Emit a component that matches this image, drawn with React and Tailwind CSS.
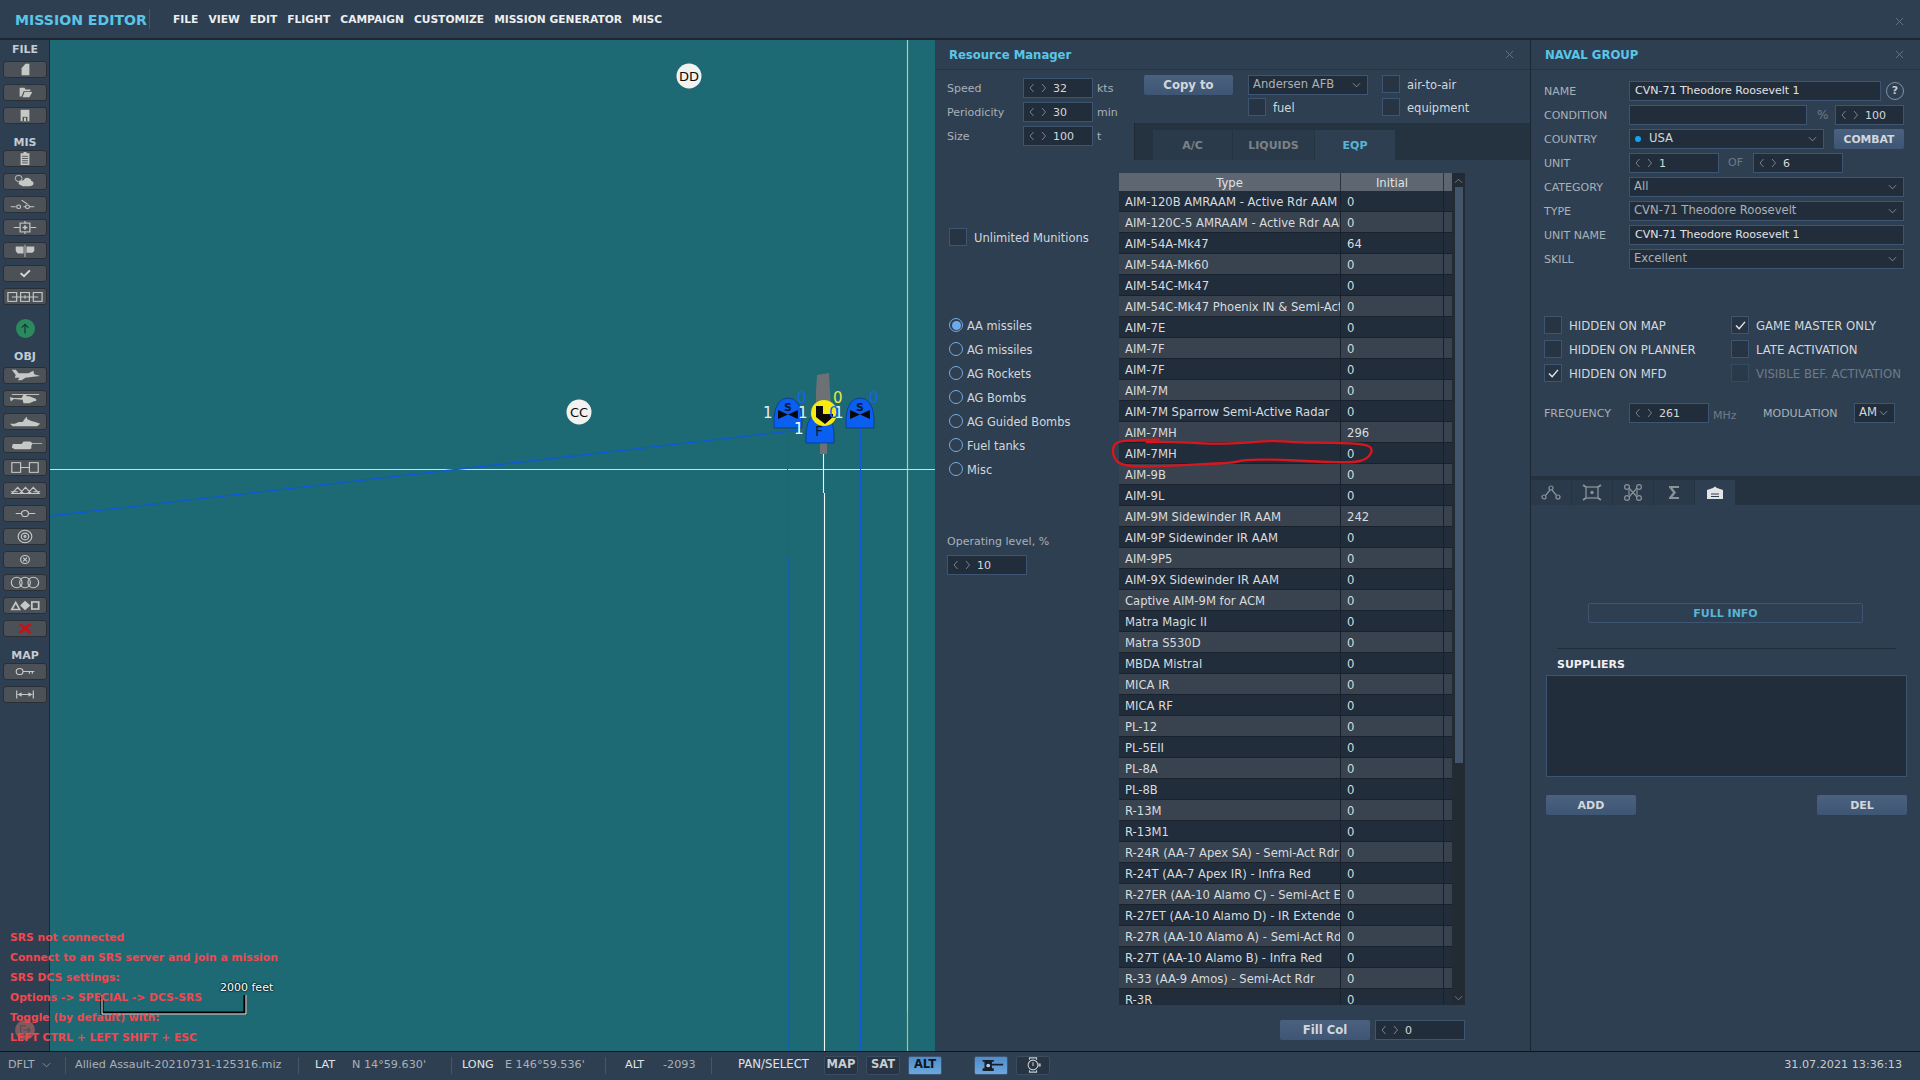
import { useMemo } from "react";

const fieldBox = "border border-[#3d5570] bg-[#222d3b]";

const rows = [
  ["AIM-120B AMRAAM - Active Rdr AAM", 0],
  ["AIM-120C-5 AMRAAM - Active Rdr AAM", 0],
  ["AIM-54A-Mk47", 64],
  ["AIM-54A-Mk60", 0],
  ["AIM-54C-Mk47", 0],
  ["AIM-54C-Mk47 Phoenix IN & Semi-Act Rdr", 0],
  ["AIM-7E", 0],
  ["AIM-7F", 0],
  ["AIM-7F", 0],
  ["AIM-7M", 0],
  ["AIM-7M Sparrow Semi-Active Radar", 0],
  ["AIM-7MH", 296],
  ["AIM-7MH", 0],
  ["AIM-9B", 0],
  ["AIM-9L", 0],
  ["AIM-9M Sidewinder IR AAM", 242],
  ["AIM-9P Sidewinder IR AAM", 0],
  ["AIM-9P5", 0],
  ["AIM-9X Sidewinder IR AAM", 0],
  ["Captive AIM-9M for ACM", 0],
  ["Matra Magic II", 0],
  ["Matra S530D", 0],
  ["MBDA Mistral", 0],
  ["MICA IR", 0],
  ["MICA RF", 0],
  ["PL-12", 0],
  ["PL-5EII", 0],
  ["PL-8A", 0],
  ["PL-8B", 0],
  ["R-13M", 0],
  ["R-13M1", 0],
  ["R-24R (AA-7 Apex SA) - Semi-Act Rdr", 0],
  ["R-24T (AA-7 Apex IR) - Infra Red", 0],
  ["R-27ER (AA-10 Alamo C) - Semi-Act Extended", 0],
  ["R-27ET (AA-10 Alamo D) - IR Extended Range", 0],
  ["R-27R (AA-10 Alamo A) - Semi-Act Rdr", 0],
  ["R-27T (AA-10 Alamo B) - Infra Red", 0],
  ["R-33 (AA-9 Amos) - Semi-Act Rdr", 0],
  ["R-3R", 0],
];

function Chevron() {
  return (
    <svg viewBox="0 0 10 6" className="w-[9px] h-[6px] shrink-0">
      <path d="M1 1 L5 5 L9 1" fill="none" stroke="#8d969e" strokeWidth="1" />
    </svg>
  );
}

function Spinner({ value, className }) {
  return (
    <div className={`${fieldBox} h-5 flex items-center pl-[5px] shrink-0 ${className}`}>
      <svg viewBox="0 0 18 10" className="w-[18px] h-[10px] shrink-0">
        <path d="M4.5 1 L1 5 L4.5 9 M13 1 L16.5 5 L13 9" fill="none" stroke="#78838e" strokeWidth="1" />
      </svg>
      <span className="ml-[6px] translate-y-px text-[11px] text-[#d3d7da]">{value}</span>
    </div>
  );
}

function Select({ children, className, textClass = "text-[#a9b1b8]" }) {
  return (
    <div className={`${fieldBox} h-5 flex items-center justify-between pl-[4px] pr-[6px] shrink-0 ${className}`}>
      <span className={`text-[11.6px] flex items-center ${textClass}`}>{children}</span>
      <Chevron />
    </div>
  );
}

function Check({ label, checked, dim, textClass = "text-[11.5px] text-[#d3d7da]" }) {
  return (
    <div className="flex items-center h-[18px]">
      <div className={`w-[18px] h-[18px] border flex items-center justify-center shrink-0 ${dim ? "border-[#364a60] bg-[#2a3a4b]" : "border-[#3d5570] bg-[#263444]"}`}>
        {checked && (
          <svg viewBox="0 0 12 10" className="w-[11px] h-[9px]">
            <path d="M1 5 L4.5 8.5 L11 1" fill="none" stroke="#e4e6e8" strokeWidth="1.6" />
          </svg>
        )}
      </div>
      <span className={`ml-[7px] translate-y-[2px] whitespace-nowrap ${textClass}`}>{label}</span>
    </div>
  );
}

function Radio({ label, on }) {
  return (
    <div className="flex items-center h-[14px]">
      <div className="w-[14px] h-[14px] rounded-full border border-[#7aa9d8] flex items-center justify-center shrink-0">
        {on && <div className="w-[9px] h-[9px] rounded-full bg-[#6daaea]" />}
      </div>
      <span className="ml-[4px] translate-y-[2px] text-[11.4px] text-[#d3d7da] whitespace-nowrap">{label}</span>
    </div>
  );
}

function BlueButton({ children, className }) {
  return (
    <div className={`h-5 pt-[2px] rounded-[2px] bg-gradient-to-b from-[#4a6280] to-[#3e5674] flex items-center justify-center font-bold text-[#d3d7da] shrink-0 ${className}`}>
      {children}
    </div>
  );
}

function CloseX() {
  return (
    <svg viewBox="0 0 10 10" className="w-[9px] h-[9px]">
      <path d="M1 1 L9 9 M9 1 L1 9" stroke="#66788a" strokeWidth="1" />
    </svg>
  );
}

const stroke = { fill: "none", stroke: "#c6c8c6", strokeWidth: 1.2 };
const fill = { fill: "#c6c8c6" };

const fileIcons = [
  <path key="a" {...fill} d="M18 7 L22 2 H26 V15 H18 Z" />,
  <g key="b">
    <path {...fill} d="M16 3 H21 L22 5 H27 V7 H20 L18 13 H16 Z" />
    <path {...fill} d="M21 8 H29 L26 14 H19 Z" />
  </g>,
  <g key="c">
    <path {...fill} d="M17 2 H26 V15 H17 Z" />
    <rect x="19" y="10" width="5" height="5" fill="#4b5156" />
    <rect x="20.5" y="11" width="2" height="4" fill="#c6c8c6" />
  </g>,
];

const misIcons = [
  <g key="a">
    <path {...fill} d="M20 1 H23 V2.5 H26 V16 H17 V2.5 H20 Z" />
    <path d="M18.5 6 H24.5 M18.5 8.5 H24.5 M18.5 11 H24.5 M18.5 13.5 H24.5" stroke="#4b5156" strokeWidth="1" />
  </g>,
  <g key="b">
    <circle cx="15" cy="5" r="3.5" fill="none" stroke="#c6c8c6" strokeWidth="1" />
    <path {...fill} d="M18 13 Q13 12 16 8 Q18 7 20 7 Q22 3 26 5 Q28 6 28 8 Q31 9 30 12 Q29 14 26 14 H19 Z" />
  </g>,
  <g key="c">
    <path {...stroke} d="M7 11 H12 M20 11 H22 M26 11 H31 M18 3.5 L24 8" />
    <circle cx="15" cy="11" r="2" {...stroke} />
    <circle cx="24" cy="11" r="2" {...stroke} />
  </g>,
  <g key="d">
    <path {...stroke} d="M10 8.5 H16 M27 8.5 H33 M21.5 1 V4 M21.5 13 V16" />
    <rect x="16.5" y="3.5" width="10" height="10" {...stroke} />
    <path d="M21.5 6 V11 M19 8.5 H24" stroke="#c6c8c6" strokeWidth="1.6" />
  </g>,
  <g key="e">
    <path {...fill} d="M12 4 H20 V12 H14 L12 9 Z" />
    <path {...fill} d="M23 4 H31 V9 L29 11 H23 Z" />
    <path d="M21.5 2 V16" stroke="#c6c8c6" strokeWidth="1" />
  </g>,
  <path key="f" d="M17 8 L20.5 11.5 L26.5 5" fill="none" stroke="#d6d8d6" strokeWidth="2" />,
  <g key="g" {...stroke}>
    <rect x="4" y="4" width="9" height="10" />
    <rect x="17" y="4" width="9" height="10" />
    <rect x="30" y="4" width="9" height="10" />
    <path d="M8 9 H35 M21.5 7 V11" />
  </g>,
];

const objIcons = [
  <path key="a" {...fill} d="M8 2 L12 2 L15 6 L25 6 L30 3 L31 7 L37 9 L30 10 L22 11 L18 14 L14 14 L16 11 L11 11 L12 8 Z" />,
  <g key="b">
    <path d="M8 4 H36" stroke="#c6c8c6" strokeWidth="1" />
    <path {...fill} d="M20 4 H23 V6 H26 L33 9 L33 11 L30 12 L26 14 H20 L19 10 L10 9 L7 12 L6 7 L10 8 H18 Z" />
  </g>,
  <path key="c" {...fill} d="M6 11 L11 11 L15 9 L19 9 L21 6 L23 3 L24 6 L28 8 L32 9 L37 11 L34 14 H9 Z" />,
  <path key="d" {...fill} d="M9 8 H18 L20 5 H27 L29 7 H39 V8 H29 L28 10 V13 L26 14 H11 L8 12 Z" />,
  <g key="e" {...stroke}>
    <rect x="8" y="3" width="9" height="11" />
    <rect x="26" y="3" width="9" height="11" />
    <path d="M17 8.5 H26" />
  </g>,
  <g key="f" {...stroke}>
    <path d="M8 12 L14 5 L20 12 Z M16 12 L22 5 L28 12 Z M24 12 L30 5 L36 12 Z" />
    <path d="M7 10 L14 10 M30 10 H37" />
  </g>,
  <g key="g" {...stroke}>
    <circle cx="21.5" cy="8.5" r="3.5" />
    <path d="M12 8.5 H18 M25 8.5 H32" />
  </g>,
  <g key="h" {...stroke}>
    <circle cx="21.5" cy="8.5" r="7" />
    <circle cx="21.5" cy="8.5" r="3.8" />
    <circle cx="21.5" cy="8.5" r="1" />
  </g>,
  <g key="i" {...stroke}>
    <circle cx="21.5" cy="8.5" r="4.5" />
    <path d="M19.5 6.5 L23.5 10.5 M23.5 6.5 L19.5 10.5" />
  </g>,
  <g key="j" {...stroke}>
    <ellipse cx="13" cy="8.5" rx="5.5" ry="6" />
    <ellipse cx="21.5" cy="8.5" rx="5.5" ry="6" />
    <ellipse cx="30" cy="8.5" rx="5.5" ry="6" />
  </g>,
  <g key="k">
    <path d="M8 13 L12 5 L16 13 Z" fill="none" stroke="#c6c8c6" strokeWidth="1.8" />
    <path {...fill} d="M21.5 3 L27 8.5 L21.5 14 L16.5 8.5 Z" />
    <rect x="28.5" y="4.5" width="7" height="8" fill="none" stroke="#c6c8c6" strokeWidth="1.8" />
  </g>,
  <path key="l" d="M16 3.5 L27 13.5 M27 3.5 L16 13.5" stroke="#c8101c" strokeWidth="3" />,
];

const mapIcons = [
  <g key="a" {...stroke}>
    <circle cx="16" cy="8.5" r="3.5" />
    <path d="M19.5 8.5 H31 M26 8.5 V11 M29 8.5 V11" />
  </g>,
  <g key="b" {...stroke}>
    <path d="M13 4 V13 M30 4 V13 M14 8.5 H29" />
    <path {...fill} stroke="none" d="M14 8.5 L18 6 V11 Z M29 8.5 L25 6 V11 Z" />
  </g>,
];

function ToolButton({ children }) {
  return (
    <div className="w-[44px] h-[17px] rounded-[3px] bg-[#4b5156] border border-[#2a2f36]">
      <svg viewBox="0 0 43 17" className="w-full h-full" preserveAspectRatio="none">
        {children}
      </svg>
    </div>
  );
}

function SideGroup({ icons }) {
  return <div className="flex flex-col gap-[6px]">{icons.map((icon, i) => <ToolButton key={i}>{icon}</ToolButton>)}</div>;
}

function Sidebar() {
  const label = "text-center text-[11px] leading-[12px] font-bold text-[#c3cbd3] translate-y-px";
  return (
    <div className="w-[50px] shrink-0 border-r border-[#1c2733] bg-[#2e3f52] pt-[3px] pl-[3px] pr-[2px]">
      <div className={`${label} mb-[6px]`}>FILE</div>
      <SideGroup icons={fileIcons} />
      <div className={`${label} mt-[12px] mb-[2px]`}>MIS</div>
      <SideGroup icons={misIcons} />
      <div className="mt-[14px] mx-auto w-[19px] h-[19px] rounded-full bg-[#2b8a5d] flex items-center justify-center">
        <svg viewBox="0 0 12 14" className="w-[10px] h-[13px]">
          <path d="M6 13 V2 M2 6 L6 2 L10 6" fill="none" stroke="#17313a" strokeWidth="1.4" />
        </svg>
      </div>
      <div className={`${label} mt-[12px] mb-[5px]`}>OBJ</div>
      <SideGroup icons={objIcons} />
      <div className={`${label} mt-[12px] mb-[2px]`}>MAP</div>
      <SideGroup icons={mapIcons} />
    </div>
  );
}

function MapLabel({ x, y, text }) {
  return (
    <g>
      <path d={`M${x} ${y - 15} V${y + 15}`} stroke="#55606a" strokeWidth="1" />
      <circle cx={x} cy={y} r="12.5" fill="#f2f2f0" />
      <text x={x} y={y + 5} textAnchor="middle" fontSize="13" fill="#0b0b0b" fontFamily="DejaVu Sans">
        {text}
      </text>
    </g>
  );
}

function Dome({ x, y }) {
  return (
    <path d={`M${x} ${y + 30} V${y + 19} Q${x + 2} ${y} ${x + 14} ${y} Q${x + 26} ${y} ${x + 28} ${y + 19} V${y + 30} Z`} fill="#0b5ff0" stroke="#0a2a66" strokeWidth="0.6" />
  );
}

function MapCanvas() {
  const num = { fontFamily: "DejaVu Sans", fontSize: 15 };
  const letter = { fontFamily: "DejaVu Sans", fill: "#071a3c", textAnchor: "middle" };
  return (
    <div className="relative w-[885px] shrink-0 bg-[#1d6a75] overflow-hidden">
      <svg viewBox="50 40 885 1011" className="absolute left-0 top-0 w-[885px] h-[1011px]">
        <path d="M907.5 40 V1011" stroke="#c9c78f" strokeWidth="1.2" />
        <path d="M907.5 1011 V1051" stroke="#d8b94a" strokeWidth="1.2" />
        <path d="M50 469.5 H935" stroke="#d6e0c8" strokeWidth="1" />
        <path d="M50 516 L800 430" stroke="#0b5ad8" strokeWidth="1.3" />
        <path d="M787.5 428 V558 H789 V1051 M860.5 428 V1051" stroke="#0b5ad8" strokeWidth="1" fill="none" />
        <path d="M823.5 443 V493 M824.5 493 V1051" stroke="#f4f6f4" strokeWidth="1.1" />
        <path d="M816 392 L817 375 L829 373 L830 392 L833 430 L816 430 Z M820 443 H827 V454 H820 Z" fill="#6d7173" />
        <MapLabel x={689} y={76} text="DD" />
        <MapLabel x={579} y={412} text="CC" />
        <Dome x={774} y={398} />
        <Dome x={846} y={398} />
        <text x="788" y="411" fontSize="11" fontWeight="bold" {...letter}>S</text>
        <text x="860" y="411" fontSize="11" fontWeight="bold" {...letter}>S</text>
        <path d="M778 410 L788 414.5 L798 410 V419 L788 414.5 L778 419 Z M850 410 L860 414.5 L870 410 V419 L860 414.5 L850 419 Z" fill="#08080c" />
        <Dome x={806} y={413} />
        <text x="819" y="436" fontSize="14" {...letter}>F</text>
        <circle cx="824" cy="413" r="13" fill="#f6ea10" />
        <path d="M816 406 H823 V414 L833 414 V417 L825 424 L816 417 Z" fill="#0a0a0a" />
        <text x="763" y="418" fill="#e8ecec" {...num}>1</text>
        <text x="798" y="418" fill="#e8ecec" {...num}>1</text>
        <text x="834" y="418" fill="#e8ecec" {...num}>1</text>
        <text x="794" y="434" fill="#ffffff" {...num}>1</text>
        <text x="797" y="403" fill="#1166e6" {...num}>0</text>
        <text x="869" y="403" fill="#1166e6" {...num}>0</text>
        <text x="829" y="418" fill="#1166e6" {...num}>0</text>
        <text x="833" y="403" fill="#e8e84a" {...num}>0</text>
        <path d="M102 996 V1013 H245 V995" fill="none" stroke="#000" strokeWidth="3.2" />
        <path d="M102 995 V1014 H246 V995" fill="none" stroke="#fff" strokeWidth="1" />
      </svg>
      <div className="absolute left-[170px] top-[941px] text-[11px] leading-[14px] text-white [text-shadow:0_0_2px_#000,0_0_2px_#000]">
        2000 feet
      </div>
    </div>
  );
}

function smooth(points) {
  let d = `M${points[0][0]} ${points[0][1]}`;
  for (let i = 1; i < points.length - 1; i++) {
    const mx = (points[i][0] + points[i + 1][0]) / 2;
    const my = (points[i][1] + points[i + 1][1]) / 2;
    d += ` Q${points[i][0]} ${points[i][1]} ${mx} ${my}`;
  }
  return d;
}

function RedCircle() {
  const d = useMemo(
    () =>
      smooth([
        [175, 58], [100, 60], [50, 65], [37, 85], [42, 115], [60, 133], [110, 140], [200, 138], [300, 133], [400, 128],
        [430, 120], [520, 118], [650, 125], [760, 128], [800, 118], [820, 90], [800, 72], [700, 68], [600, 68], [520, 62],
        [440, 68], [350, 72], [270, 68], [180, 65], [100, 68],
      ]),
    []
  );
  return (
    <svg viewBox="0 0 1200 480" className="absolute left-[165px] top-[380px] w-[400px] h-[160px] pointer-events-none">
      <path d={d} fill="none" stroke="#d9161e" strokeWidth="7" strokeLinecap="round" />
    </svg>
  );
}

function ResourceTable() {
  return (
    <div className="w-[346px] h-[832px] flex bg-[#222d3b] overflow-hidden">
      <div className="w-[333px] shrink-0">
        <div className="flex h-[18px] bg-[#5e6672] text-[11.6px] text-[#e0e3e5] leading-[20px] text-center">
          <div className="w-[222px] border-r border-[#2a3340]">Type</div>
          <div className="w-[103px] border-r border-[#2a3340]">Initial</div>
          <div className="flex-1" />
        </div>
        {rows.map(([name, value], i) => (
          <div key={i} className={`flex h-[21px] border-b border-[#18212c] text-[11.6px] text-[#d8dcdf] leading-[22px] ${i % 2 ? "bg-[#38434f]" : "bg-[#222d3b]"}`}>
            <div className="w-[222px] pl-[6px] border-r border-[#18212c] overflow-hidden whitespace-nowrap">{name}</div>
            <div className="w-[103px] pl-[6px] border-r border-[#18212c]">{value}</div>
            <div className="flex-1" />
          </div>
        ))}
      </div>
      <div className="w-[13px] bg-[#222a33] flex flex-col items-center pt-[5px] relative">
        <svg viewBox="0 0 10 6" className="w-[9px] h-[6px]">
          <path d="M1 5 L5 1 L9 5" fill="none" stroke="#7a8590" strokeWidth="1" />
        </svg>
        <div className="w-[8px] h-[576px] mt-[3px] bg-[#43556b]" />
        <svg viewBox="0 0 10 6" className="w-[9px] h-[6px] absolute bottom-[4px]">
          <path d="M1 1 L5 5 L9 1" fill="none" stroke="#7a8590" strokeWidth="1" />
        </svg>
      </div>
    </div>
  );
}

function ResourceManager() {
  const unitRows = [
    ["Speed", "32", "kts"],
    ["Periodicity", "30", "min"],
    ["Size", "100", "t"],
  ];
  const tab = "h-[30px] pt-[2px] flex items-center justify-center text-[11px] font-bold";
  return (
    <div className="relative w-[595px] shrink-0 bg-[#2e3f52] flex flex-col">
      <div className="h-[30px] border-b border-[#263444] flex items-center justify-between pl-[14px] pr-[16px]">
        <span className="translate-y-px text-[11.65px] font-bold text-[#5bc5e6]">Resource Manager</span>
        <CloseX />
      </div>
      <div className="flex h-[90px]">
        <div className="w-[199px] shrink-0 pl-3 pt-2 flex flex-col gap-1">
          {unitRows.map(([label, value, unit]) => (
            <div key={label} className="flex items-center h-5 text-[11px] text-[#a9b1b8]">
              <span className="w-[76px] translate-y-px">{label}</span>
              <Spinner value={value} className="w-[70px]" />
              <span className="ml-1 translate-y-px">{unit}</span>
            </div>
          ))}
        </div>
        <div className="flex-1 pt-[5px]">
          <div className="flex h-[41px]">
            <BlueButton className="ml-[10px] w-[89px] text-[11.7px]">Copy to</BlueButton>
            <div className="ml-[15px] w-[120px]">
              <Select className="w-[120px]">Andersen AFB</Select>
              <div className="mt-[3px]">
                <Check label="fuel" />
              </div>
            </div>
            <div className="ml-[14px] flex flex-col gap-[5px]">
              <Check label="air-to-air" />
              <Check label="equipment" />
            </div>
          </div>
          <div className="mt-[7px] h-[37px] bg-[#25323f] border-l border-[#1f2a36] pt-[7px] pl-[18px] flex">
            <div className={`${tab} w-[80px] bg-[#2a3a4b] border-r border-[#25323f] text-[#7b8288]`}>A/C</div>
            <div className={`${tab} w-[82px] bg-[#2a3a4b] border-r border-[#25323f] text-[#7b8288]`}>LIQUIDS</div>
            <div className={`${tab} w-[80px] bg-[#2e3f52] text-[#59b4d6]`}>EQP</div>
          </div>
        </div>
      </div>
      <div className="flex flex-1">
        <div className="w-[184px] shrink-0 pl-[14px] pt-[68px]">
          <Check label="Unlimited Munitions" />
          <div className="mt-[72px] flex flex-col gap-[10px]">
            <Radio label="AA missiles" on />
            <Radio label="AG missiles" />
            <Radio label="AG Rockets" />
            <Radio label="AG Bombs" />
            <Radio label="AG Guided Bombs" />
            <Radio label="Fuel tanks" />
            <Radio label="Misc" />
          </div>
          <div className="mt-[60px] -ml-[2px] text-[11px] leading-[12px] text-[#a9b1b8]">Operating level, %</div>
          <Spinner value="10" className="w-[80px] mt-[7px] -ml-[2px]" />
        </div>
        <div className="pt-[13px]">
          <ResourceTable />
          <div className="mt-[15px] flex justify-end gap-[5px]">
            <BlueButton className="w-[90px] text-[11.7px]">Fill Col</BlueButton>
            <Spinner value="0" className="w-[90px]" />
          </div>
        </div>
      </div>
      <RedCircle />
    </div>
  );
}

function FieldRow({ label, children }) {
  return (
    <div className="flex items-center h-5">
      <span className="w-[85px] shrink-0 translate-y-px text-[11px] text-[#a9b1b8]">{label}</span>
      {children}
    </div>
  );
}

function TextField({ value, className }) {
  return (
    <div className={`${fieldBox} h-5 flex items-center pl-[5px] text-[11px] text-[#e0e3e5] shrink-0 ${className}`}>{value}</div>
  );
}

function NavalGroup() {
  const small = "text-[11.7px] text-[#d3d7da]";
  const tabIcons = [
    <g key="a" fill="none" stroke="#8b9299" strokeWidth="1.2">
      <circle cx="12" cy="5" r="2" />
      <circle cx="5" cy="14" r="2" />
      <circle cx="19" cy="14" r="2" />
      <path d="M11 7 L6.5 12.5 M13 7 L17.5 12.5" />
    </g>,
    <g key="b" fill="none" stroke="#8b9299" strokeWidth="1.3">
      <rect x="6" y="4" width="12" height="11" />
      <path d="M3 2 L6 4 M21 2 L18 4 M3 17 L6 15 M21 17 L18 15" strokeWidth="1.8" />
      <circle cx="12" cy="9.5" r="1" fill="#8b9299" />
    </g>,
    <g key="c" fill="none" stroke="#8b9299" strokeWidth="1.2">
      <circle cx="6" cy="4" r="2.4" />
      <circle cx="18" cy="4" r="2.4" />
      <circle cx="6" cy="15" r="2.4" />
      <circle cx="18" cy="15" r="2.4" />
      <path d="M8 5 L16 14 M16 5 L8 14 M8 7 V12 M16 7 V12" />
    </g>,
    <path key="d" d="M7 3 H17 V5 H10.5 L14 9.5 L10.5 14 H17 V16 H7 V14.5 L11 9.5 L7 4.5 Z" fill="#8b9299" />,
    <g key="e">
      <path d="M4 7 L10 5 L12 3.5 L14 5 L20 7 V16 H4 Z" fill="#e2e4e6" />
      <path d="M8 11 H16 M8 13.5 H16" stroke="#2e3f52" strokeWidth="1" />
    </g>,
  ];
  return (
    <div className="w-[390px] shrink-0 border-l border-[#1c2733] bg-[#2e3f52] flex flex-col">
      <div className="h-[30px] border-b border-[#263444] flex items-center justify-between pl-[14px] pr-[16px]">
        <span className="translate-y-px text-[11.7px] font-bold text-[#5bc5e6]">NAVAL GROUP</span>
        <CloseX />
      </div>
      <div className="pl-[13px] pt-[11px] flex flex-col gap-1">
        <FieldRow label="NAME">
          <TextField value="CVN-71 Theodore Roosevelt 1" className="w-[252px]" />
          <div className="ml-[5px] w-[18px] h-[18px] rounded-full border border-[#7f93a8] flex items-center justify-center text-[11px] font-bold text-[#c3cbd3]">?</div>
        </FieldRow>
        <FieldRow label="CONDITION">
          <div className={`${fieldBox} h-5 w-[178px]`} />
          <span className="ml-[10px] w-[18px] text-[12px] text-[#6f7b87]">%</span>
          <Spinner value="100" className="w-[69px]" />
        </FieldRow>
        <FieldRow label="COUNTRY">
          <Select className="w-[195px]" textClass="text-[#d3d7da]">
            <span className="ml-[1px] w-[6px] h-[6px] rounded-full bg-[#0ba5f5] mr-[8px]" />
            USA
          </Select>
          <BlueButton className="ml-[10px] w-[70px] text-[10.8px]">COMBAT</BlueButton>
        </FieldRow>
        <FieldRow label="UNIT">
          <Spinner value="1" className="w-[90px]" />
          <span className="ml-[9px] w-[25px] text-[11px] text-[#6f7b87]">OF</span>
          <Spinner value="6" className="w-[90px]" />
        </FieldRow>
        <FieldRow label="CATEGORY">
          <Select className="w-[275px]">All</Select>
        </FieldRow>
        <FieldRow label="TYPE">
          <Select className="w-[275px]">CVN-71 Theodore Roosevelt</Select>
        </FieldRow>
        <FieldRow label="UNIT NAME">
          <TextField value="CVN-71 Theodore Roosevelt 1" className="w-[275px]" />
        </FieldRow>
        <FieldRow label="SKILL">
          <Select className="w-[275px]">Excellent</Select>
        </FieldRow>
      </div>
      <div className="pl-[13px] mt-[47px] grid grid-cols-[187px_1fr] gap-y-[6px]">
        <Check label="HIDDEN ON MAP" textClass={small} />
        <Check label="GAME MASTER ONLY" checked textClass={small} />
        <Check label="HIDDEN ON PLANNER" textClass={small} />
        <Check label="LATE ACTIVATION" textClass={small} />
        <Check label="HIDDEN ON MFD" checked textClass={small} />
        <Check label="VISIBLE BEF. ACTIVATION" dim textClass="text-[11.7px] text-[#6f7b87]" />
      </div>
      <div className="pl-[13px] mt-[21px] flex items-center h-5">
        <span className="w-[85px] translate-y-px text-[11px] text-[#a9b1b8]">FREQUENCY</span>
        <Spinner value="261" className="w-[80px]" />
        <span className="ml-1 w-[50px] text-[11px] text-[#6f7b87] pt-[6px]">MHz</span>
        <span className="w-[91px] translate-y-px text-[11px] text-[#a9b1b8]">MODULATION</span>
        <Select className="w-[41px]" textClass="text-[#d3d7da]">AM</Select>
      </div>
      <div className="mt-[53px] h-[29px] bg-[#25323f] pt-[4px] flex gap-px">
        {tabIcons.map((icon, i) => (
          <div key={i} className={`w-[40px] h-[25px] flex items-center justify-center ${i === 4 ? "bg-[#2e3f52]" : "bg-[#2a3a4b]"}`}>
            <svg viewBox="0 0 24 19" className="w-[24px] h-[19px]">
              {icon}
            </svg>
          </div>
        ))}
      </div>
      <div className="mt-[98px] ml-[57px] w-[275px] h-5 pt-[2px] rounded-[2px] border border-[#3d5570] flex items-center justify-center text-[11px] font-bold text-[#58b4d4]">
        FULL INFO
      </div>
      <div className="mt-[25px] ml-[26px] w-[339px] h-px bg-[#222d3b]" />
      <div className="mt-[10px] ml-[26px] text-[11px] leading-[12px] font-bold text-[#eef0f2]">SUPPLIERS</div>
      <div className={`${fieldBox} mt-[4px] ml-[15px] w-[361px] h-[102px]`} />
      <div className="mt-[18px] ml-[15px] w-[361px] flex justify-between">
        <BlueButton className="w-[90px] text-[11px]">ADD</BlueButton>
        <BlueButton className="w-[90px] text-[11px]">DEL</BlueButton>
      </div>
    </div>
  );
}

function ModeButton({ children, active }) {
  return (
    <div className={`w-[34px] h-[19px] rounded-[2px] border flex items-center justify-center text-[11.5px] font-bold shrink-0 ${active ? "border-[#3d5570] bg-gradient-to-b from-[#4f8cc9] to-[#6ca8dd] text-[#0d1620]" : "border-[#3a4c60] bg-[#263444] text-[#c8cdd1]"}`}>
      {children}
    </div>
  );
}

function StatusBar() {
  const sep = "h-[17px] flex items-center border-r border-[#46566a] shrink-0";
  return (
    <div className="h-[29px] shrink-0 pb-[2px] border-t border-[#10161d] bg-[#2e3f52] flex items-center text-[11.2px] text-[#a9b1b8] whitespace-nowrap">
      <div className={`${sep} w-[66px] pl-2 gap-[7px]`}>
        DFLT <Chevron />
      </div>
      <div className={`${sep} w-[233px] pl-[9px]`}>Allied Assault-20210731-125316.miz</div>
      <div className={`${sep} w-[153px] pl-[16px]`}>
        <span className="w-[37px] text-[#e0e3e5]">LAT</span>N 14°59.630'
      </div>
      <div className={`${sep} w-[154px] pl-[10px]`}>
        <span className="w-[43px] text-[#e0e3e5]">LONG</span>E 146°59.536'
      </div>
      <div className={`${sep} w-[106px] pl-[19px]`}>
        <span className="w-[38px] text-[#e0e3e5]">ALT</span>-2093
      </div>
      <span className="ml-[26px] w-[86px] text-[11.7px] text-[#e0e3e5]">PAN/SELECT</span>
      <div className="flex gap-2">
        <ModeButton>MAP</ModeButton>
        <ModeButton>SAT</ModeButton>
        <ModeButton active>ALT</ModeButton>
      </div>
      <div className="ml-[32px] flex gap-2">
        <ModeButton active>
          <svg viewBox="0 0 30 16" className="w-[28px] h-[15px]">
            <path d="M6 2 H18 V4 H16 V6 H28 V8 H16 V11 H18 V14 H6 V11 H8 V4 H6 Z" fill="#16202c" />
            <circle cx="12" cy="8" r="2" fill="#b9cfe4" />
          </svg>
        </ModeButton>
        <ModeButton>
          <svg viewBox="0 0 18 18" className="w-[16px] h-[16px]">
            <circle cx="9" cy="9" r="5.5" fill="none" stroke="#c8cdd1" strokeWidth="1.2" />
            <path d="M5 3 V1 H13 V3 M5 15 V17 H13 V15 M9 6 V10 M15 8 H17 V10 H15" fill="none" stroke="#c8cdd1" strokeWidth="1.2" />
          </svg>
        </ModeButton>
      </div>
      <span className="ml-auto pr-[18px] text-[#c8cdd1]">31.07.2021 13:36:13</span>
    </div>
  );
}

function TopBar() {
  const menu = ["FILE", "VIEW", "EDIT", "FLIGHT", "CAMPAIGN", "CUSTOMIZE", "MISSION GENERATOR", "MISC"];
  return (
    <div className="h-10 shrink-0 border-b-2 border-[#1c2733] bg-[#2e3f52] flex items-center pl-[15px]">
      <div className="w-[135px] border-r border-[#46566a] text-[14.1px] leading-[20px] font-bold text-[#5bc5e6] whitespace-nowrap">
        <span className="inline-block translate-y-px">MISSION EDITOR</span>
      </div>
      <div className="ml-[23px] flex gap-[10px] translate-y-px text-[10.7px] font-bold text-[#eceef0]">
        {menu.map((m) => (
          <span key={m}>{m}</span>
        ))}
      </div>
      <div className="ml-auto pr-4 pt-1">
        <CloseX />
      </div>
    </div>
  );
}

export default function App() {
  const srs = [
    "SRS not connected",
    "Connect to an SRS server and join a mission",
    "SRS DCS settings:",
    "Options -> SPECIAL -> DCS-SRS",
    "Toggle (by default) with:",
    "LEFT CTRL + LEFT SHIFT + ESC",
  ];
  return (
    <div className="w-[1920px] h-[1080px] overflow-hidden flex flex-col font-['DejaVu_Sans',sans-serif] bg-[#2e3f52]">
      <TopBar />
      <div className="relative flex-1 flex min-h-0">
        <Sidebar />
        <MapCanvas />
        <ResourceManager />
        <NavalGroup />
        <div className="absolute left-[15px] top-[980px] w-5 h-5 rounded-full bg-[#7d5b5f] flex items-center justify-center">
          <svg viewBox="0 0 14 14" className="w-3 h-3">
            <path d="M8 2 H2 V12 H8 M5 7 H13 M10 4 L13 7 L10 10" fill="none" stroke="#4f4a52" strokeWidth="1.2" />
          </svg>
        </div>
        <div className="absolute left-[10px] top-[888px] text-[10.75px] leading-[20px] font-bold text-[#f0484f] whitespace-nowrap">
          {srs.map((line) => (
            <div key={line}>{line}</div>
          ))}
        </div>
      </div>
      <StatusBar />
    </div>
  );
}
